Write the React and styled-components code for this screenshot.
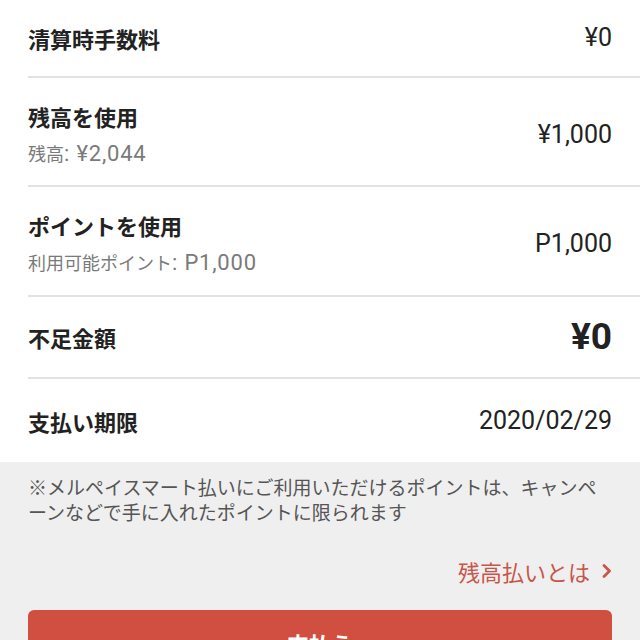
import React from "react";
import styled, { createGlobalStyle } from "styled-components";

const Global = createGlobalStyle`
  html, body {
    margin: 0;
    padding: 0;
    background: #efefef;
    overflow: hidden;
  }
  body {
    font-family: "Noto Sans CJK JP", "Noto Sans", sans-serif;
    color: #222;
  }
`;

const Page = styled.div`
  width: 640px;
`;

const List = styled.div`
  background: #fff;
  padding-left: 28px;
`;

const Row = styled.div`
  display: flex;
  align-items: center;
  justify-content: space-between;
  height: ${({ $h }) => $h}px;
  padding: ${({ $pt }) => $pt || 0}px 28px 0 0;
  border-bottom: ${({ $last }) => ($last ? "none" : "2px solid #e2e2e2")};
`;

const LabelBlock = styled.div`
  display: flex;
  flex-direction: column;
  gap: 7px;
`;

const Label = styled.div`
  font-size: 22px;
  font-weight: 700;
  line-height: 30px;
  color: #222;
`;

const Sub = styled.div`
  font-size: 18px;
  line-height: 30px;
  color: #7a7a7a;
`;

const Num = styled.span`
  font-family: Roboto, sans-serif;
  font-size: 22px;
  letter-spacing: 0.8px;
`;

const Value = styled.div`
  font-family: Roboto, "Noto Sans CJK JP", sans-serif;
  font-size: ${({ $big }) => ($big ? "37px" : "25px")};
  font-weight: ${({ $big }) => ($big ? 700 : 400)};
  line-height: 36px;
  color: #222;
`;

const Footer = styled.div`
  padding: 12px 28px 0;
`;

const Note = styled.p`
  margin: 0;
  font-size: 19px;
  line-height: 25px;
  color: #555;
`;

const LinkRow = styled.div`
  display: flex;
  justify-content: flex-end;
  margin-top: 32px;
`;

const Link = styled.a`
  display: flex;
  align-items: center;
  gap: 12px;
  font-size: 22px;
  line-height: 30px;
  color: #c8564a;
  text-decoration: none;
  cursor: pointer;
`;

const PayButton = styled.button`
  display: block;
  width: 100%;
  height: 66px;
  margin-top: 24px;
  border: none;
  border-radius: 6px;
  background: #d04f40;
  color: #fff;
  font-family: inherit;
  font-size: 22px;
  font-weight: 700;
`;

const Chevron = () => (
  <svg width="10" height="14" viewBox="0 0 10 14">
    <path
      d="M2 1.5 L7.5 7 L2 12.5"
      fill="none"
      stroke="#c8564a"
      strokeWidth="2.8"
      strokeLinecap="round"
      strokeLinejoin="round"
    />
  </svg>
);

const rows = [
  { label: "清算時手数料", value: "¥0", h: 76 },
  { label: "残高を使用", sub: "残高", subNum: "¥2,044", value: "¥1,000", h: 101, pt: 6 },
  { label: "ポイントを使用", sub: "利用可能ポイント", subNum: "P1,000", value: "P1,000", h: 102, pt: 6 },
  { label: "不足金額", value: "¥0", big: true, h: 80 },
  { label: "支払い期限", value: "2020/02/29", h: 83, last: true },
];

export default function App() {
  return (
    <Page>
      <Global />
      <List>
        {rows.map((r) => (
          <Row key={r.label} $h={r.h} $pt={r.pt} $last={r.last}>
            <LabelBlock>
              <Label>{r.label}</Label>
              {r.sub && (
                <Sub>
                  {r.sub}
                  <Num>: {r.subNum}</Num>
                </Sub>
              )}
            </LabelBlock>
            <Value $big={r.big}>{r.value}</Value>
          </Row>
        ))}
      </List>
      <Footer>
        <Note>
          ※メルペイスマート払いにご利用いただけるポイントは、キャンペーンなどで手に入れたポイントに限られます
        </Note>
        <LinkRow>
          <Link>
            残高払いとは
            <Chevron />
          </Link>
        </LinkRow>
        <PayButton>支払う</PayButton>
      </Footer>
    </Page>
  );
}
